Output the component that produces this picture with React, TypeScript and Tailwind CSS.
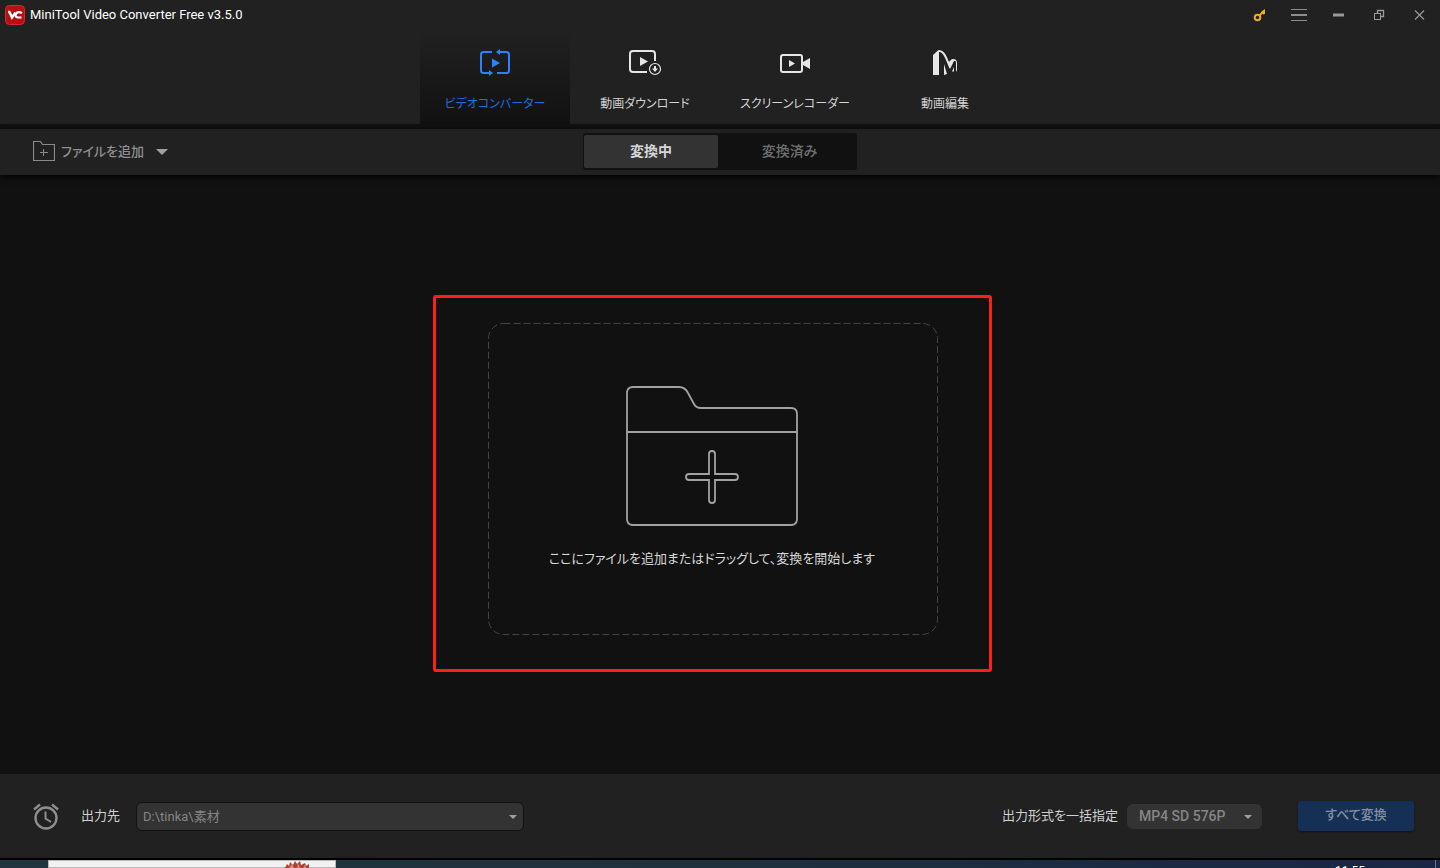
import type { ReactNode } from "react";

function ConverterIcon() {
  return (
    <svg width="32" height="28" viewBox="0 0 32 28" fill="none" stroke="#2b84ff" strokeWidth="2">
      <path d="M13 3H4.500Q2 3 2 5.500V21.500Q2 24 4.500 24H12" />
      <path d="M18 24H27.500Q30 24 30 21.500V5.500Q30 3 27.500 3H20" />
      <path d="M17 3L21 0V6ZM14 24L10 21V27Z" fill="#2b84ff" stroke="none" />
      <path d="M13 9.500V18.500L21 14Z" fill="#2b84ff" stroke="none" />
    </svg>
  );
}

function DownloadIcon() {
  return (
    <svg width="34" height="28" viewBox="0 0 34 28" fill="none" stroke="#e6e6e6" strokeWidth="2">
      <path d="M19 23H5Q2 23 2 20V5Q2 2 5 2H24Q27 2 27 5V12" />
      <path d="M12 8V17L20 12.500Z" fill="#e6e6e6" stroke="none" />
      <circle cx="27" cy="20" r="5.500" strokeWidth="1.200" />
      <path d="M26 17H28V19.500H30L27 23L24 19.500H26Z" fill="#e6e6e6" stroke="none" />
    </svg>
  );
}

function RecorderIcon() {
  return (
    <svg width="32" height="28" viewBox="0 0 32 28" fill="none" stroke="#e6e6e6" strokeWidth="2">
      <rect x="2" y="6" width="21" height="17" rx="2" />
      <path d="M10 11V18L16 14.500Z" fill="#e6e6e6" stroke="none" />
      <path d="M24 13L31 9V20L24 16Z" fill="#e6e6e6" stroke="none" />
    </svg>
  );
}

function EditorIcon() {
  return (
    <svg width="26" height="28" viewBox="0 0 26 28" fill="#e6e6e6">
      <path d="M1 6L6.500 1L7 2V26H1Z" />
      <path d="M5 3L7 1C13 2 14 6 17 13C18 12 19 10 21 10Q25 10 25 14V21L24 23V14C24 11 22 11 21 14L18 20C15 15 13 5 8 3Z" />
      <path d="M12 15L15 25L12 26ZM20 22.500L22 18V22.500Z" />
    </svg>
  );
}

function AddFileIcon() {
  return (
    <svg width="22" height="22" viewBox="0 0 22 22" fill="none" stroke="#8a8a8a">
      <path d="M.5 19.500V.5H7.500L9.500 3.500H21.500V19.500Z" strokeWidth="1.200" />
      <path d="M7 11.500H15M10.500 8V15" />
    </svg>
  );
}

function AlarmIcon() {
  return (
    <svg width="26" height="28" viewBox="0 0 26 28" fill="none" stroke="#8e8e8e" strokeWidth="2.400">
      <circle cx="13" cy="16" r="10.500" />
      <path d="M1 7.500L7 2.500M19 2.500L25 7.500" />
      <path d="M12.500 9.500V16.500L18 20" strokeWidth="2" />
    </svg>
  );
}

function FolderIcon() {
  return (
    <svg width="174" height="142" viewBox="0 0 174 142" fill="none" stroke="#a2a2a2" strokeWidth="1.800">
      <path d="M2 8Q2 2 8 2H54Q60 2 63 8L69 19Q71 23 76 23H166Q172 23 172 29V134Q172 140 166 140H8Q2 140 2 134Z" />
      <path d="M2 47H172" />
      <path d="M84 89V69Q84 66 87 66T90 69V89H110Q113 89 113 92T110 95H90V115Q90 118 87 118T84 115V95H64Q61 95 61 92T64 89Z" />
    </svg>
  );
}

function Caret({ className }: { className: string }) {
  return (
    <svg className={className} viewBox="0 0 12 6" fill="#a0a0a0">
      <path d="M0 0H12L6 6Z" />
    </svg>
  );
}

function Logo() {
  return (
    <svg width="20" height="20" viewBox="0 0 20 20">
      <rect x=".5" y=".5" width="19" height="19" rx="4" fill="#b90f12" stroke="#d42a2a" />
      <path d="M3 7H4.500L7 12.500L10.500 7.500" fill="none" stroke="#fff" strokeWidth="2.400" />
      <path d="M17 8Q12.500 6 11 9T13 12.500H16.500" fill="none" stroke="#fff" strokeWidth="2.200" />
    </svg>
  );
}

function WindowButton({ label, children }: { label: string; children: ReactNode }) {
  return (
    <button type="button" aria-label={label} className="flex size-5 items-center justify-center">
      {children}
    </button>
  );
}

function TitleBar() {
  return (
    <header className="flex h-8 items-center justify-between bg-[#212121] pr-[11px] pb-[2px] pl-[5px]">
      <div className="flex items-center gap-[5px]">
        <Logo />
        <h1 className="font-[Roboto] text-[13px] leading-5 text-white">MiniTool Video Converter Free v3.5.0</h1>
      </div>
      <div className="flex items-center gap-5">
        <WindowButton label="登録">
          <svg width="14" height="14" viewBox="0 0 14 14" fill="none" stroke="#f5a623">
            <circle cx="5.500" cy="9.500" r="2.800" strokeWidth="2" />
            <path d="M7.500 7.500L12 3" strokeWidth="2" />
            <path d="M9 4L13 1V6L11 6.500Z" fill="#f5a623" stroke="none" />
          </svg>
        </WindowButton>
        <WindowButton label="メニュー">
          <svg width="16" height="14" viewBox="0 0 16 14" stroke="#8c8c8c">
            <path d="M0 1.500H16M0 12.500H16" />
            <path d="M0 7H16" strokeWidth="2" />
          </svg>
        </WindowButton>
        <WindowButton label="最小化">
          <svg width="12" height="4" viewBox="0 0 12 4" fill="#999">
            <rect y=".5" width="11" height="3" />
          </svg>
        </WindowButton>
        <WindowButton label="元に戻す">
          <svg width="12" height="12" viewBox="0 0 12 12" fill="none" stroke="#999">
            <rect x="1.500" y="4.500" width="6" height="6" />
            <path d="M4.500 4V1.500H10.500V7.500H8" strokeWidth="1.300" />
          </svg>
        </WindowButton>
        <WindowButton label="閉じる">
          <svg width="12" height="12" viewBox="0 0 12 12" stroke="#999" strokeWidth="1.200">
            <path d="M2 1.500L11 10.500M11 1.500L2 10.500" />
          </svg>
        </WindowButton>
      </div>
    </header>
  );
}

const tabs = [
  { label: "ビデオコンバーター", icon: <ConverterIcon />, active: true },
  { label: "動画ダウンロード", icon: <DownloadIcon />, active: false },
  { label: "スクリーンレコーダー", icon: <RecorderIcon />, active: false },
  { label: "動画編集", icon: <EditorIcon />, active: false },
];

function MainTabs() {
  return (
    <nav className="flex justify-center bg-[#212121]">
      {tabs.map((tab) => (
        <button
          key={tab.label}
          type="button"
          aria-current={tab.active ? "page" : undefined}
          className={
            tab.active
              ? "flex h-[92px] w-[150px] flex-col items-center gap-[17px] bg-linear-to-b from-[#212121] to-[#111111] pt-[17px] text-[#1a6fe0]"
              : "flex h-[92px] w-[150px] flex-col items-center gap-[17px] pt-[17px] text-[#d4d4d4]"
          }
        >
          {tab.icon}
          <span className="text-xs leading-5 whitespace-nowrap">{tab.label}</span>
        </button>
      ))}
    </nav>
  );
}

function Toolbar() {
  return (
    <div className="z-10 mt-[5px] grid h-[46px] grid-cols-[1fr_auto_1fr] items-center bg-[#212121] pb-[1px] shadow-[0_2px_6px_#000000]">
      <div className="flex items-center pl-[33px]">
        <button type="button" className="flex items-center gap-[6px] text-[13px] leading-5 font-medium text-[#8f8f8f]">
          <AddFileIcon />
          ファイルを追加
        </button>
        <button type="button" aria-label="追加メニュー" className="ml-2 p-1">
          <Caret className="h-[6px] w-3" />
        </button>
      </div>
      <div className="flex h-[37px] w-[274px] rounded-[3px] bg-[#111111] py-[2px] pl-[1px] text-sm">
        <button type="button" aria-pressed="true" className="w-[134px] rounded-[2px] bg-[#333333] pb-[2px] font-bold text-[#d6d6d6]">
          変換中
        </button>
        <button type="button" aria-pressed="false" className="flex-1 pb-[2px] pl-1 font-medium text-[#707070]">
          変換済み
        </button>
      </div>
    </div>
  );
}

function DropArea() {
  return (
    <main className="flex flex-1 items-center justify-center bg-[#111111] pt-[18px] pr-[15px]">
      <div className="rounded-[3px] border-3 border-[#ff2015] pt-[25px] pr-[51px] pb-[34px] pl-[52px]">
        <button type="button" className="relative flex h-[312px] w-[450px] flex-col items-center gap-[22px] pt-[62px] pr-[2px]">
          <svg className="absolute inset-0 size-full" viewBox="0 0 450 312" fill="none">
            <rect x=".5" y=".5" width="449" height="311" rx="15" stroke="#444" strokeDasharray="7 3" />
          </svg>
          <FolderIcon />
          <span className="text-[13px] leading-5 text-[#d8d8d8]">ここにファイルを追加またはドラッグして、変換を開始します</span>
        </button>
      </div>
    </main>
  );
}

function BottomBar() {
  return (
    <footer className="flex h-[84px] items-center justify-between bg-[#212121] pr-[26px] pl-[33px]">
      <div className="flex items-center">
        <button type="button" aria-label="スケジュール">
          <AlarmIcon />
        </button>
        <label htmlFor="output" className="ml-[22px] pb-[1px] text-[13px] leading-5 text-[#d0d0d0]">
          出力先
        </label>
        <div className="relative ml-4">
          <select
            id="output"
            className="h-[29px] w-[388px] appearance-none rounded-md border border-[#111111] bg-[#333333] px-[6px] pt-[1px] text-[13px] text-[#858585]"
          >
            <option>D:\tinka\素材</option>
          </select>
          <Caret className="pointer-events-none absolute top-[13px] right-[7px] h-1 w-2" />
        </div>
      </div>
      <div className="flex items-center">
        <label htmlFor="format" className="pb-[1px] text-[13px] leading-5 text-[#d0d0d0]">
          出力形式を一括指定
        </label>
        <div className="relative ml-[9px]">
          <select
            id="format"
            className="h-[25px] w-[135px] appearance-none rounded-md bg-[#333333] px-3 text-sm font-medium text-[#858585]"
          >
            <option>MP4 SD 576P</option>
          </select>
          <Caret className="pointer-events-none absolute top-[11px] right-[10px] h-1 w-2" />
        </div>
        <button
          type="button"
          className="ml-9 h-[30px] w-[116px] rounded-[3px] bg-[#152f55] pb-[2px] text-[13px] font-medium text-[#8290a3] shadow-[0_1px_2px_#111111]"
        >
          すべて変換
        </button>
      </div>
    </footer>
  );
}

function DesktopEdge() {
  return (
    <div className="flex h-[10px] justify-between overflow-hidden border-t-2 border-black bg-linear-to-r from-[#20353f] via-[#1e313d] to-[#1a2645] pr-1 pl-12">
      <div className="flex w-[288px] justify-end border border-[#bbbbbb] bg-[#f1f1f1] pr-[26px]">
        <svg width="24" height="7" viewBox="0 0 24 7">
          <path d="M0 7L2 3L4 5L5 1L8 4L10 0L12 3L15 0L16 4L20 2L21 5L24 3V7Z" fill="#a94435" />
          <path d="M4 7L7 3L9 7M12 7L13 2L15 7M18 7L20 4L21 7" fill="#e48a70" />
        </svg>
      </div>
      <div className="border-r border-[#69758c] pr-[70px]">
        <time className="block pt-[3px] text-xs leading-4 text-white">11:55</time>
      </div>
    </div>
  );
}

export default function App() {
  return (
    <div className="flex min-h-screen flex-col bg-[#111111] font-[Roboto,'Noto_Sans_CJK_JP',sans-serif] [font-feature-settings:'palt']">
      <TitleBar />
      <MainTabs />
      <Toolbar />
      <DropArea />
      <BottomBar />
      <DesktopEdge />
    </div>
  );
}
